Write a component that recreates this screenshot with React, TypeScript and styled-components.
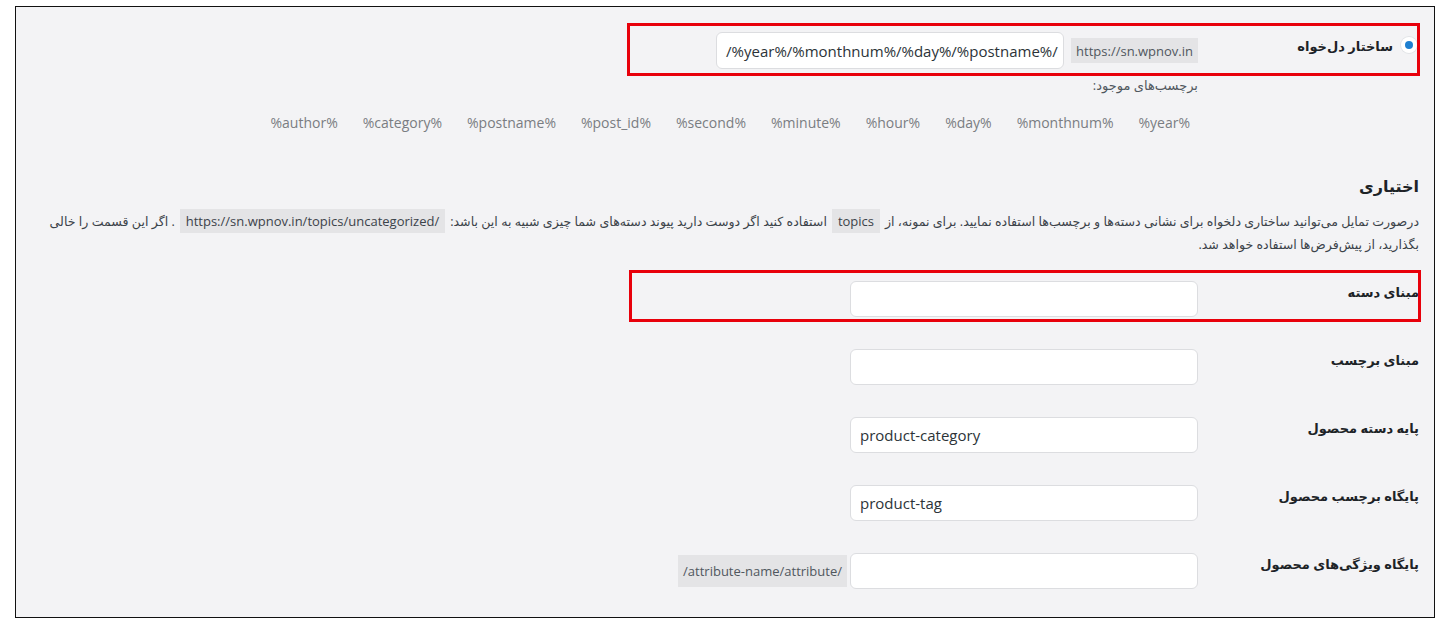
import styled, { createGlobalStyle } from "styled-components";

type Box = { top: number; right: number; bottom: number; left: number };

const GlobalStyle = createGlobalStyle`
  body {
    margin: 0;
    background: #ffffff;
  }
  * {
    box-sizing: border-box;
  }
`;

const Frame = styled.div`
  direction: rtl;
  margin: 6px 0 0 15px;
  width: 1420px;
  height: 612px;
  border: 1px solid #111;
  background: #f3f3f5;
  padding: 25px 15px 0 0;
  overflow: hidden;
  font-family: "Open Sans", "DejaVu Sans", sans-serif;
  color: #1d2327;
`;

const Highlight = styled.div<{ $box: Box }>`
  position: relative;

  &::after {
    content: "";
    position: absolute;
    top: ${p => p.$box.top}px;
    right: ${p => p.$box.right}px;
    bottom: ${p => p.$box.bottom}px;
    left: ${p => p.$box.left}px;
    border: 3px solid #e8000b;
    pointer-events: none;
  }
`;

const FieldRow = styled.div<{ $pad?: number }>`
  display: grid;
  grid-template-columns: 221px 1fr;
  padding: ${p => p.$pad ?? 0}px 0;
`;

const Th = styled.div<{ $top?: number }>`
  display: flex;
  align-items: flex-start;
  gap: 8px;
  padding-top: ${p => p.$top ?? 1}px;
  font-size: 13px;
  font-weight: 700;
  line-height: 20px;
  color: #1d2327;
`;

const Td = styled.div<{ $gap?: number }>`
  display: flex;
  align-items: center;
  gap: ${p => p.$gap ?? 7}px;
`;

const Radio = styled.span`
  display: inline-flex;
  align-items: center;
  justify-content: center;
  width: 16px;
  height: 16px;
  margin-right: 2px;
  margin-top: 1px;
  border-radius: 50%;
  background: #fff;
  box-shadow: 0 0 0 1px #e2e4e7;

  &::before {
    content: "";
    width: 8px;
    height: 8px;
    border-radius: 50%;
    background: #1e7fd0;
  }
`;

const TextInput = styled.div<{ $h?: number }>`
  display: flex;
  align-items: center;
  width: 348px;
  height: ${p => p.$h ?? 36}px;
  padding: 0 9px;
  background: #fff;
  border: 1px solid #dcdde0;
  border-radius: 6px;
  direction: ltr;
  font-size: 15px;
  color: #2c3338;
`;

const Code = styled.code<{ $h?: number }>`
  display: inline-flex;
  align-items: center;
  height: ${p => p.$h ?? 25}px;
  padding: 0 5px;
  background: #e4e4e6;
  direction: ltr;
  font-family: "Open Sans", sans-serif;
  font-size: 13px;
  color: #50575e;
`;

const InlineCode = styled.code`
  padding: 3px 6px;
  margin: 0 5px;
  background: #e4e4e6;
  direction: ltr;
  unicode-bidi: isolate;
  font-family: "Open Sans", sans-serif;
  font-size: 13px;
  color: #3c434a;
`;

const Hint = styled.div`
  margin-top: 6px;
  font-size: 13px;
  line-height: 20px;
  color: #50575e;
`;

const TagList = styled.div`
  display: flex;
  gap: 9px;
  margin-top: 13px;
`;

const Tag = styled.button`
  padding: 5px 8px;
  border: 0;
  background: transparent;
  font-family: "Open Sans", sans-serif;
  font-size: 14px;
  line-height: 20px;
  color: #7a7d82;
  direction: ltr;
`;

const Heading = styled.h2`
  margin: 36px 0 0;
  font-size: 16px;
  font-weight: 700;
  line-height: 24px;
  color: #1d2327;
`;

const Paragraph = styled.p`
  margin: 12px 0 9px;
  padding-left: 4px;
  font-size: 12.6px;
  line-height: 23px;
  color: #3c434a;
`;

const FieldColumn = styled.div`
  display: flex;
  flex-direction: column;
`;

const tags = [
  "%year%",
  "%monthnum%",
  "%day%",
  "%hour%",
  "%minute%",
  "%second%",
  "%post_id%",
  "%postname%",
  "%category%",
  "%author%"
];

type Field = { label: string; value?: string; suffix?: string; box?: Box };

const fields: Field[] = [
  { label: "مبنای دسته", box: { top: 5, right: -2, bottom: 11, left: 613 } },
  { label: "مبنای برچسب" },
  { label: "پایه دسته محصول", value: "product-category" },
  { label: "پایگاه برچسب محصول", value: "product-tag" },
  { label: "پایگاه ویژگی‌های محصول", suffix: "/attribute-name/attribute/" }
];

const FieldLine = ({ label, value, suffix }: Field) => (
  <FieldRow $pad={16}>
    <Th>{label}</Th>
    <Td $gap={3}>
      <TextInput>{value}</TextInput>
      {suffix && <Code $h={32}>{suffix}</Code>}
    </Td>
  </FieldRow>
);

const App = () => (
  <>
    <GlobalStyle />
    <Frame>
      <Highlight $box={{ top: -9, right: -1, bottom: -7, left: 611 }}>
        <FieldRow>
          <Th $top={4}>
            <Radio />
            <span>ساختار دل‌خواه</span>
          </Th>
          <Td>
            <Code>https://sn.wpnov.in</Code>
            <TextInput $h={37}>/%year%/%monthnum%/%day%/%postname%/</TextInput>
          </Td>
        </FieldRow>
      </Highlight>

      <FieldRow>
        <span />
        <FieldColumn>
          <Hint>برچسب‌های موجود:</Hint>
          <TagList>
            {tags.map(tag => (
              <Tag key={tag}>{tag}</Tag>
            ))}
          </TagList>
        </FieldColumn>
      </FieldRow>

      <Heading>اختیاری</Heading>
      <Paragraph>
        درصورت تمایل می‌توانید ساختاری دلخواه برای نشانی دسته‌ها و برچسب‌ها استفاده نمایید. برای نمونه، از
        <InlineCode>topics</InlineCode>
        استفاده کنید اگر دوست دارید پیوند دسته‌های شما چیزی شبیه به این باشد:
        <InlineCode>https://sn.wpnov.in/topics/uncategorized/</InlineCode>
        <span>. اگر این قسمت را خالی </span>
        <span>بگذارید، از پیش‌فرض‌ها استفاده خواهد شد.</span>
      </Paragraph>

      {fields.map(field =>
        field.box ? (
          <Highlight key={field.label} $box={field.box}>
            <FieldLine {...field} />
          </Highlight>
        ) : (
          <FieldLine key={field.label} {...field} />
        )
      )}
    </Frame>
  </>
);

export default App;
